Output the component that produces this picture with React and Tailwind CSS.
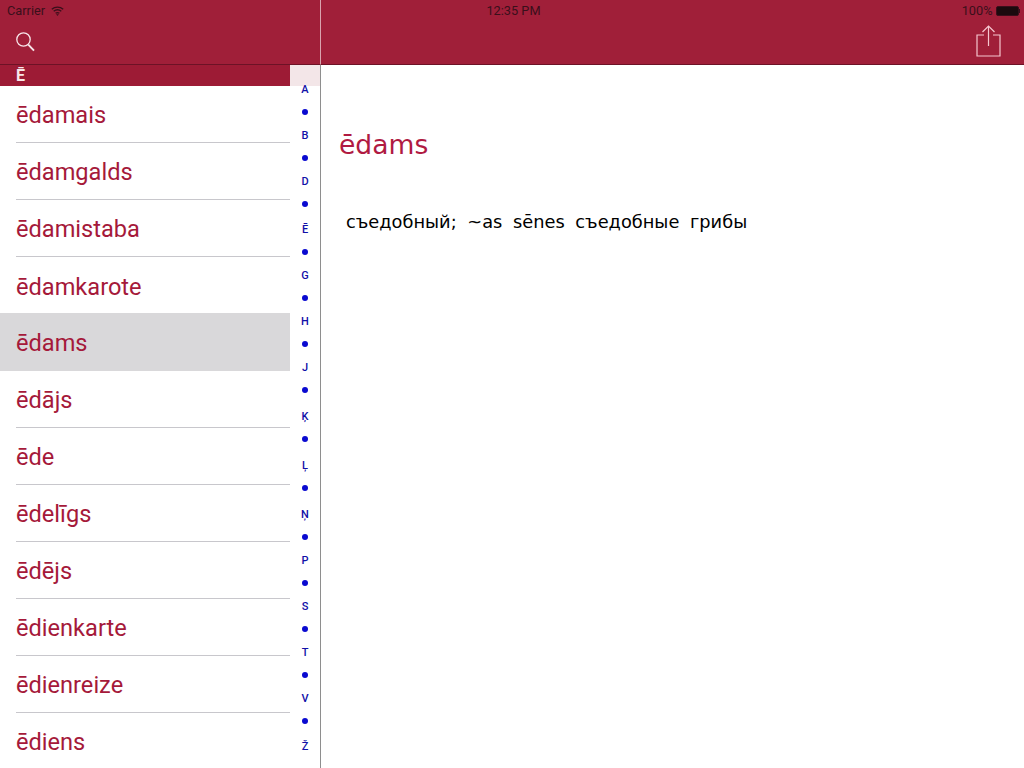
import React from "react";

const words = [
  "ēdamais",
  "ēdamgalds",
  "ēdamistaba",
  "ēdamkarote",
  "ēdams",
  "ēdājs",
  "ēde",
  "ēdelīgs",
  "ēdējs",
  "ēdienkarte",
  "ēdienreize",
  "ēdiens",
];

const indexItems = [
  { label: "A" },
  { dot: true },
  { label: "B" },
  { dot: true },
  { label: "D" },
  { dot: true },
  { label: "Ē", extra: "mt-[2px]" },
  { dot: true },
  { label: "G" },
  { dot: true },
  { label: "H" },
  { dot: true },
  { label: "J" },
  { dot: true },
  { label: "Ķ", extra: "mt-[3px]" },
  { dot: true },
  { label: "Ļ", extra: "mt-[3px]" },
  { dot: true },
  { label: "Ņ", extra: "mt-[3px]" },
  { dot: true },
  { label: "P" },
  { dot: true },
  { label: "S" },
  { dot: true },
  { label: "T" },
  { dot: true },
  { label: "V" },
  { dot: true },
  { label: "Ž", extra: "mt-[2px]" },
];

const StatusBar = () => (
  <div className="absolute top-0 left-0 right-0 h-[21px] flex items-center justify-between pl-[7px] pr-[4px] text-[12.75px] text-[#3a0f1b] font-['Roboto',sans-serif] z-10">
    <div className="flex items-center gap-[6px] w-[200px]">
      <span>Carrier</span>
      <svg width="13" height="10" viewBox="0 0 13 10" fill="none" stroke="#3a0f1b" strokeWidth="1.4">
        <path d="M0.8 3.2C4 0.4 9 0.4 12.2 3.2" />
        <path d="M2.7 5.3C4.9 3.5 8.1 3.5 10.3 5.3" />
        <path d="M4.6 7.3C5.7 6.5 7.3 6.5 8.4 7.3" />
        <path d="M6.5 9.6L5.6 8.6C6.1 8.3 6.9 8.3 7.4 8.6Z" fill="#3a0f1b" strokeWidth="0.6" />
      </svg>
    </div>
    <span>12:35 PM</span>
    <div className="flex items-center justify-end gap-[3px] w-[200px]">
      <span>100%</span>
      <div className="flex items-center">
        <div className="w-[23px] h-[10px] rounded-[2px] bg-[#1c0a0e] border border-[#3a0f1b]" />
        <div className="w-[1.5px] h-[4px] bg-[#3a0f1b]" />
      </div>
    </div>
  </div>
);

const App = () => {
  return (
    <div className="relative w-[1024px] h-[768px] flex overflow-hidden bg-white font-['Roboto',sans-serif]">
      <StatusBar />

      {/* left column */}
      <div className="w-[321px] h-full flex flex-col">
        <header className="h-[65px] shrink-0 bg-[#a01f39] border-b border-[#6d1226] border-r-[#d9a3ae] border-r flex items-end pl-[16px] pb-[12px]">
          <svg width="19" height="20" viewBox="0 0 19 20" fill="none" stroke="#f8e6ea" strokeWidth="1.3">
            <circle cx="7.5" cy="7.5" r="6.7" />
            <path d="M12.3 12.6L18 18.6" strokeWidth="1.9" />
          </svg>
        </header>

        <div className="flex-1 flex min-h-0 border-r border-[#8e8e8e]">
          <div className="w-[290px] shrink-0 flex flex-col">
            <div className="h-[21px] shrink-0 bg-[#9d1b35] pl-[16px] flex items-center text-[16px] font-bold text-[#f8e8ea]">
              Ē
            </div>
            {words.map((word) => (
              <div
                key={word}
                className={
                  word === "ēdams"
                    ? "h-[58px] -mt-[1px] shrink-0 bg-[#d9d8da] pl-[16px]"
                    : "h-[57px] shrink-0 pl-[16px]"
                }
              >
                <div
                  className={
                    word === "ēdams" || word === "ēdamkarote"
                      ? "h-full flex items-center pt-[4px] text-[23.6px] text-[#a5193a]"
                      : "h-full flex items-center pt-[4px] text-[23.6px] text-[#a5193a] border-b border-[#c8c7cc]"
                  }
                >
                  {word}
                </div>
              </div>
            ))}
          </div>

          {/* alphabet index */}
          <div className="flex-1 flex flex-col items-center">
            <div className="h-[21px] shrink-0 w-full bg-[#f3e6e8]" />
            <div className="w-full -mt-[8px] flex flex-col items-center">
              {indexItems.map((item, i) =>
                item.dot ? (
                  <div key={i} className="h-[23px] pb-[2px] flex items-center justify-center">
                    <div className="w-[6px] h-[6px] rounded-full bg-[#0a0ad0]" />
                  </div>
                ) : (
                  <div
                    key={i}
                    className={`h-[23px] pt-[2px] flex items-center justify-center text-[11px] font-medium text-[#1010a8] ${item.extra || ""}`}
                  >
                    {item.label}
                  </div>
                )
              )}
            </div>
          </div>
        </div>
      </div>

      {/* right column */}
      <div className="flex-1 h-full flex flex-col">
        <header className="h-[65px] shrink-0 bg-[#a01f39] border-b border-[#6d1226] flex items-end justify-end pr-[23px] pb-[7px]">
          <svg width="25" height="32" viewBox="0 0 25 32" fill="none" stroke="#f6c6cf" strokeWidth="1.2">
            <path d="M8 10H1V31H24V10H17" />
            <path d="M12.5 1V21" />
            <path d="M6.5 7L12.5 1L18.5 7" />
          </svg>
        </header>
        <main className="flex-1 pl-[18px] pt-[60px] font-['DejaVu_Sans',sans-serif]">
          <h1 className="text-[26.6px] leading-[40px] text-[#b01a42]">ēdams</h1>
          <p className="mt-[45px] pl-[7px] text-[17.8px] leading-[24px] [word-spacing:5px] text-black">
            съедобный; ~as sēnes съедобные грибы
          </p>
        </main>
      </div>
    </div>
  );
};

export default App;
